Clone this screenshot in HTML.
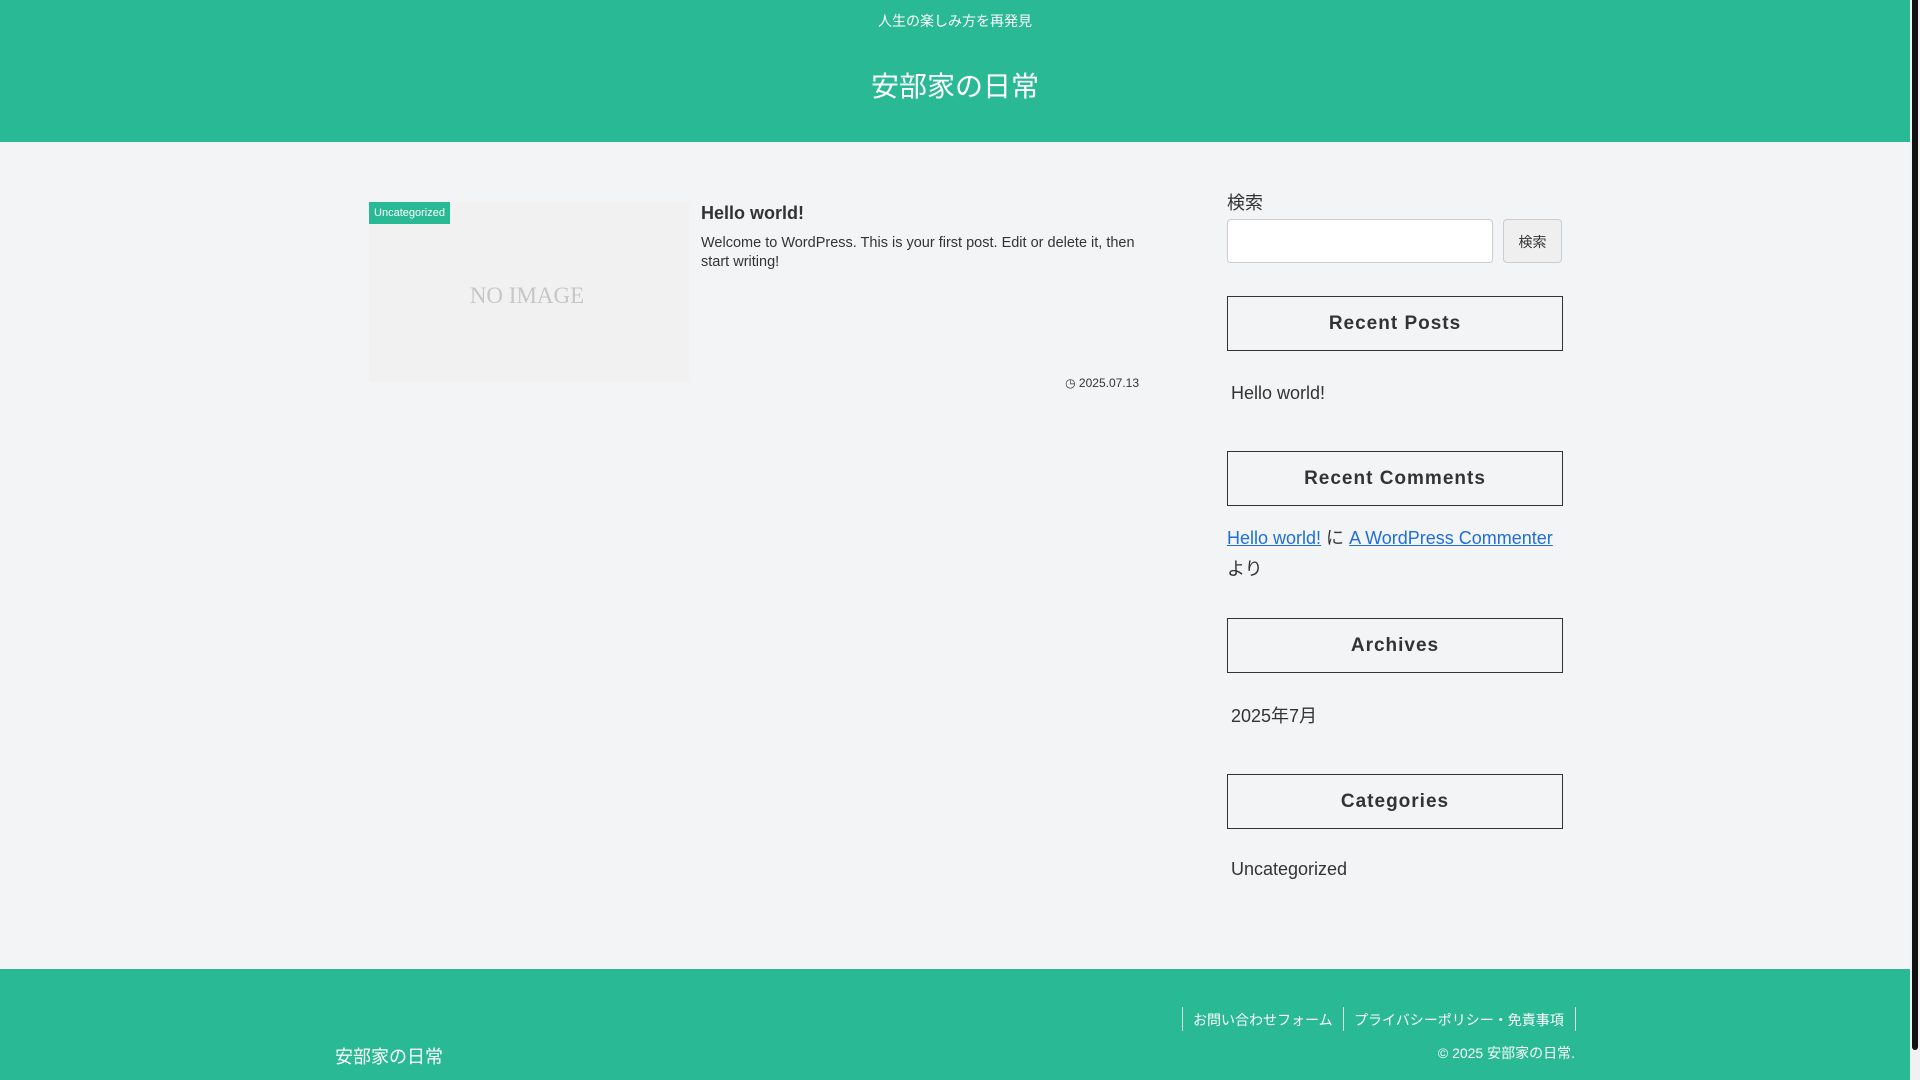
<!DOCTYPE html>
<html><head><meta charset="utf-8"><style>
*{margin:0;padding:0;box-sizing:border-box}
body{width:1920px;height:1080px;background:#f3f4f6;font-family:"Liberation Sans","Noto Sans CJK JP",sans-serif;color:#333;position:relative;overflow:hidden}
.a{position:absolute;white-space:nowrap}
.hd{left:0;top:0;width:1910px;height:142px;background:#29b994}
.ft{left:0;top:969px;width:1910px;height:111px;background:#29b994}
.sb{left:1910px;top:0;width:10px;height:1080px;background:#f1f1f1}
.th{left:1912px;top:0;width:6px;height:1050px;background:#111;border-radius:0 0 3px 3px}
.box{left:1227px;width:336px;height:55px;border:1.5px solid #333;font-weight:bold;font-size:19px;letter-spacing:1px;text-align:center;line-height:54px;color:#333}
.w{font-size:18px;color:#333}
a{color:#1f6fd6}
</style></head><body>
<div class="a hd"></div>
<div class="a" style="left:0;width:1910px;top:11px;text-align:center;color:#fff;font-size:14px">人生の楽しみ方を再発見</div>
<div class="a" style="left:0;width:1910px;top:65px;text-align:center;color:#fff;font-size:28px">安部家の日常</div>

<div class="a" style="left:369px;top:202px;width:320px;height:180px;background:#f1f1f1"></div>
<div class="a" style="left:367px;top:283px;width:320px;text-align:center;font-family:'Liberation Serif',serif;font-size:23px;color:#c6c6c6">NO IMAGE</div>
<div class="a" style="left:369px;top:202px;width:81px;height:22px;background:#29b994;color:#fff;font-size:11px;line-height:22px;text-align:center">Uncategorized</div>
<div class="a" style="left:701px;top:203px;font-size:18px;font-weight:bold;color:#333">Hello world!</div>
<div class="a" style="left:701px;top:234px;font-size:14.5px;line-height:19px;color:#333;white-space:normal;width:440px">Welcome to WordPress. This is your first post. Edit or delete it, then start writing!</div>
<div class="a" style="left:1040px;top:376px;font-size:12px;color:#333;width:99px;text-align:right">&#9719; 2025.07.13</div>

<div class="a w" style="left:1227px;top:189px">検索</div>
<div class="a" style="left:1227px;top:219px;width:266px;height:44px;background:#fff;border:1px solid #ccc;border-radius:4px"></div>
<div class="a" style="left:1503px;top:219px;width:59px;height:44px;background:#efefef;border:1px solid #ccc;border-radius:4px;font-size:14px;text-align:center;line-height:44px">検索</div>
<div class="a box" style="top:296px">Recent Posts</div>
<div class="a w" style="left:1231px;top:383px">Hello world!</div>
<div class="a box" style="top:451px">Recent Comments</div>
<div class="a w" style="left:1227px;top:523px;line-height:31px;white-space:normal;width:360px"><a href="#">Hello world!</a> に <a href="#">A WordPress Commenter</a><br>より</div>
<div class="a box" style="top:618px">Archives</div>
<div class="a w" style="left:1231px;top:702px">2025年7月</div>
<div class="a box" style="top:774px">Categories</div>
<div class="a w" style="left:1231px;top:859px">Uncategorized</div>

<div class="a ft"></div>
<div class="a" style="left:335px;top:1043px;color:#fff;font-size:18px">安部家の日常</div>
<div class="a" style="left:1182px;top:1007px;height:24px;border-left:1px solid #ddd;border-right:1px solid #ddd;width:394px"></div>
<div class="a" style="left:1343px;top:1007px;height:24px;border-left:1px solid #ddd"></div>
<div class="a" style="left:1193px;top:1010px;color:#fff;font-size:14px">お問い合わせフォーム</div>
<div class="a" style="left:1354px;top:1010px;color:#fff;font-size:14px">プライバシーポリシー・免責事項</div>
<div class="a" style="left:1300px;width:275px;text-align:right;top:1043px;color:#fff;font-size:14px">© 2025 安部家の日常.</div>
<div class="a sb"></div><div class="a th"></div>
</body></html>
